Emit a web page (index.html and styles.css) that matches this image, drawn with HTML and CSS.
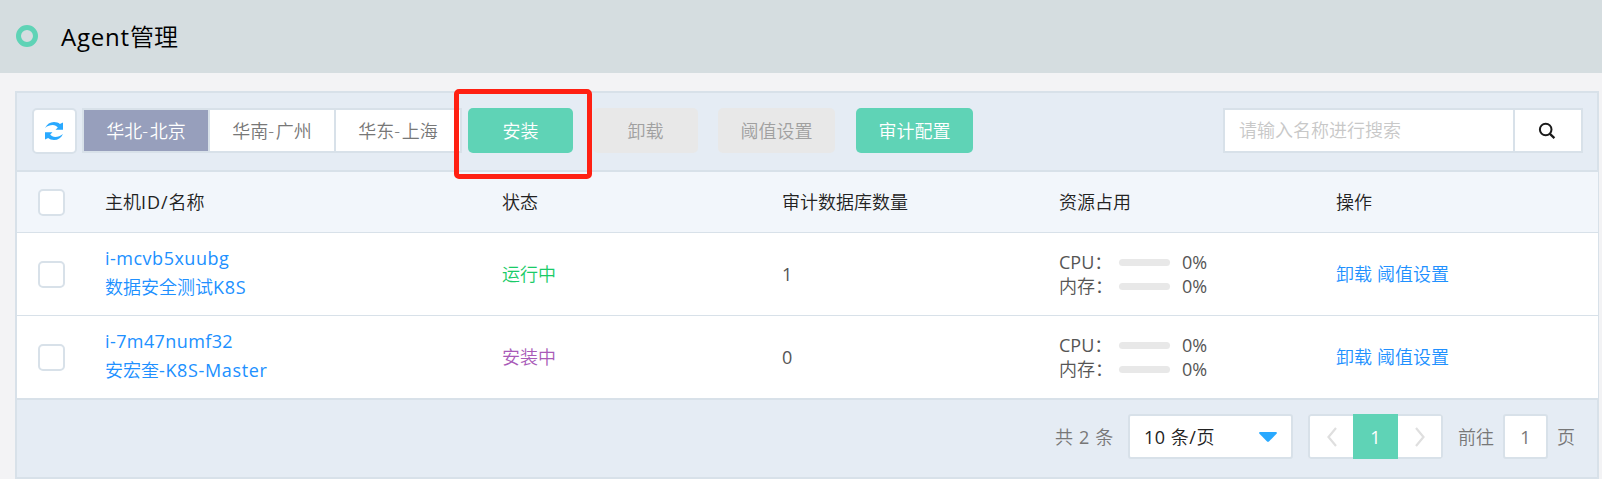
FILE: index.html
```html
<!DOCTYPE html>
<html lang="zh-CN">
<head>
<meta charset="utf-8">
<title>Agent管理</title>
<link rel="stylesheet" href="styles.css">
</head>
<body>
<header class="page-head">
  <span class="ring"></span>
  <h1 class="title"><span class="title-latin">Agent</span>管理</h1>
</header>
<main class="panel">
  <div class="toolbar">
    <button class="refresh" aria-label="刷新">
      <svg width="20" height="20" viewBox="0 0 20 20" fill="#29a9ff"><path d="M1 7C3 3 6 1 10 1c2.400 0 4.400.7 5.900 1.900L19 1.600V8.800h-7.500l2.300-2.200C12.500 5 11 4.100 8.700 4.100 6 4.100 3.500 5 1 7z"/><path d="M19 13C17 17 14 19 10 19c-2.400 0-4.400-.7-5.900-1.900L1 18.400V11.200h7.500l-2.300 2.200c1.300 1.600 2.800 2.500 5.100 2.500 2.700 0 5.200-.9 7.700-2.900z"/></svg>
    </button>
    <div class="tabs">
      <button class="tab active">华北<span class="dash">-</span>北京</button>
      <button class="tab">华南<span class="dash">-</span>广州</button>
      <button class="tab">华东<span class="dash">-</span>上海</button>
    </div>
    <div class="actions">
      <div class="marked"><button class="btn primary">安装</button><span class="marker"></span></div>
      <button class="btn disabled">卸载</button>
      <button class="btn wide disabled">阈值设置</button>
      <button class="btn wide primary">审计配置</button>
    </div>
    <div class="search">
      <div class="search-input">请输入名称进行搜索</div>
      <button class="search-btn" aria-label="搜索">
        <svg width="18" height="18" viewBox="0 0 18 18" fill="none" stroke="#1a1a1a"><circle cx="7.700" cy="7.500" r="5.800" stroke-width="2"/><path d="M11.700 11.700l4.700 4.500" stroke-width="2.300"/></svg>
      </button>
    </div>
  </div>
  <div class="table">
    <div class="row head">
      <div><span class="check"></span></div>
      <div>主机<span class="id-label">ID/</span>名称</div>
      <div>状态</div>
      <div>审计数据库数量</div>
      <div>资源占用</div>
      <div>操作</div>
    </div>
    <div class="row">
      <div><span class="check"></span></div>
      <div class="host"><a class="id-a">i-mcvb5xuubg</a><a>数据安全测试<span class="k8s">K8S</span></a></div>
      <div class="running">运行中</div>
      <div class="num">1</div>
      <div class="usage">
        <div class="meter"><span class="label"><span class="num">CPU</span>：</span><span class="bar"></span><span class="pct num">0%</span></div>
        <div class="meter"><span class="label">内存：</span><span class="bar"></span><span class="pct num">0%</span></div>
      </div>
      <div class="ops"><a>卸载</a><a>阈值设置</a></div>
    </div>
    <div class="row">
      <div><span class="check"></span></div>
      <div class="host"><a class="id-b">i-7m47numf32</a><a>安宏奎<span class="master">-K8S-Master</span></a></div>
      <div class="installing">安装中</div>
      <div class="num">0</div>
      <div class="usage">
        <div class="meter"><span class="label"><span class="num">CPU</span>：</span><span class="bar"></span><span class="pct num">0%</span></div>
        <div class="meter"><span class="label">内存：</span><span class="bar"></span><span class="pct num">0%</span></div>
      </div>
      <div class="ops"><a>卸载</a><a>阈值设置</a></div>
    </div>
  </div>
  <footer class="foot">
    <span class="total">共 <span class="num">2</span> 条</span>
    <div class="select"><span class="size"><span class="num">10</span> 条<span class="num">/</span>页</span><svg width="18" height="10" viewBox="0 0 18 10"><path d="M1 0h16q1.500.5.5 1.800L10.200 9.200q-1.200 1-2.400 0L.5 1.800Q-.5.5 1 0z" fill="#29a9ff"/></svg></div>
    <div class="pager">
      <span class="arrow"><svg width="10" height="20" viewBox="0 0 10 20"><path d="M9 1L1.500 10 9 19" fill="none" stroke="#dfdfdf" stroke-width="2.200"/></svg></span>
      <span class="current num">1</span>
      <span class="arrow"><svg width="10" height="20" viewBox="0 0 10 20"><path d="M1 1l7.500 9L1 19" fill="none" stroke="#dfdfdf" stroke-width="2.200"/></svg></span>
    </div>
    <span class="goto">前往</span>
    <span class="page-input num">1</span>
    <span class="unit">页</span>
  </footer>
</main>
</body>
</html>
```
FILE: styles.css
```css
* { box-sizing: border-box; }
body {
  margin: 0;
  height: 479px;
  overflow: hidden;
  background: #f3f3f5;
  font: 350 18px/24px "Open Sans", "Noto Sans CJK SC", sans-serif;
  color: #555;
}
button { font: inherit; padding: 0; border: 0; }
.page-head {
  display: flex;
  align-items: center;
  height: 73px;
  padding-left: 16px;
  background: #d5dde0;
}
.ring { width: 22px; height: 22px; margin-bottom: 1px; border: 5px solid #5fd3b6; border-radius: 50%; }
.title { margin: 0 0 0 23px; font-size: 24px; line-height: 32px; font-weight: 350; color: #000; }
.title-latin { font-weight: 400; letter-spacing: 0.8px; }
.dash { letter-spacing: 1.5px; }
.num, .id-label, .id-a, .id-b, .k8s, .master { font-weight: 400; }
.id-label { letter-spacing: 0.9px; }
.id-a { letter-spacing: 0.5px; }
.id-b { letter-spacing: 0.4px; }
.k8s { letter-spacing: 0.7px; }
.master { letter-spacing: 0.65px; }
.panel {
  width: 1584px;
  height: 388px;
  margin: 18px 0 0 15px;
  border: 2px solid #d8e1e9;
  border-right: 0;
}
.toolbar {
  display: flex;
  height: 79px;
  padding: 15px 14px 0 15px;
  background: #e5ecf4;
  border-bottom: 2px solid #d8e1e9;
  border-right: 2px solid #d8e1e9;
}
.refresh {
  display: flex;
  align-items: center;
  justify-content: center;
  width: 45px;
  height: 46px;
  background: #fff;
  border: 2px solid #d8e1e9;
  border-radius: 5px;
}
.refresh svg { margin-right: 1px; }
.tabs {
  display: flex;
  gap: 2px;
  height: 45px;
  margin-left: 5px;
  padding: 2px;
  background: #d8e1e9;
}
.tab { width: 124px; background: #fff; color: #777; }
.tab.active { background: #979fbc; color: #fff; }
.actions { display: flex; gap: 20px; margin-left: 6px; }
.marked { position: relative; height: 45px; }
.marker {
  position: absolute;
  left: -14px;
  top: -19px;
  width: 138px;
  height: 90px;
  border: 5px solid #ff2012;
  border-radius: 5px;
}
.btn { width: 105px; height: 45px; border-radius: 5px; }
.btn.wide { width: 117px; }
.btn.wide.primary { margin-left: 1px; }
.primary { background: #5fd3b6; color: #fff; }
.disabled { background: #e8e8e8; color: #a0a0a0; }
.search {
  display: flex;
  gap: 2px;
  width: 360px;
  height: 45px;
  margin-left: auto;
  padding: 2px;
  background: #d8e1e9;
}
.search-input { flex: 1; padding-left: 14px; line-height: 41px; background: #fff; color: #c8c8c8; }
.search-btn {
  display: flex;
  align-items: center;
  justify-content: center;
  width: 66px;
  background: #fff;
}
.search-btn svg { margin-right: 2px; }
.table { border-right: 1px solid #d8e1e9; background: #fff; }
.row {
  display: grid;
  grid-template-columns: 88px 397px 280px 277px 277px 1fr;
  align-items: center;
  height: 83px;
  border-bottom: 1px solid #d8e1e9;
}
.row:last-child { height: 84px; border-bottom-width: 2px; }
.row.head { height: 61px; background: #f2f6fb; color: #222; }
.check {
  display: block;
  width: 27px;
  height: 27px;
  margin-left: 21px;
  background: #fff;
  border: 2px solid #d8e1e9;
  border-radius: 5px;
}
.host { display: flex; flex-direction: column; line-height: 29px; padding-bottom: 3px; }
a { color: #2090ff; }
.running { color: #19cb67; }
.installing { color: #a95bb8; }
.meter { display: flex; align-items: center; height: 24px; }
.label { width: 60px; white-space: nowrap; }
.bar { width: 51px; height: 7px; border-radius: 4px; background: #e8e8e8; }
.pct { margin-left: 12px; }
.ops { display: flex; gap: 5px; }
.foot {
  display: flex;
  height: 77px;
  padding: 14px 0 0 1038px;
  line-height: 46px;
  background: #e5ecf4;
  border-right: 2px solid #d8e1e9;
  color: #777;
}
.total { width: 73px; white-space: nowrap; word-spacing: 1.3px; }
.select {
  display: flex;
  align-items: center;
  justify-content: space-between;
  width: 165px;
  height: 45px;
  padding: 2px 14px;
  background: #fff;
  border: 2px solid #d8e1e9;
  border-radius: 3px;
  color: #222;
}
.size { letter-spacing: 0.5px; }
.pager {
  display: flex;
  width: 135px;
  height: 45px;
  margin-left: 15px;
  background: #fff;
  border-radius: 3px;
}
.arrow {
  display: flex;
  align-items: center;
  justify-content: center;
  width: 45px;
  border: 2px solid #d8e1e9;
}
.arrow:first-child { border-right: 0; border-radius: 3px 0 0 3px; }
.arrow:last-child { border-left: 0; border-radius: 0 3px 3px 0; }
.current { width: 45px; background: #5fd3b6; color: #fff; text-align: center; }
.goto { width: 45px; margin-left: 15px; }
.page-input {
  width: 45px;
  height: 45px;
  line-height: 42px;
  text-align: center;
  background: #fff;
  border: 2px solid #d8e1e9;
  border-radius: 3px;
}
.unit { margin-left: 9px; }
```
